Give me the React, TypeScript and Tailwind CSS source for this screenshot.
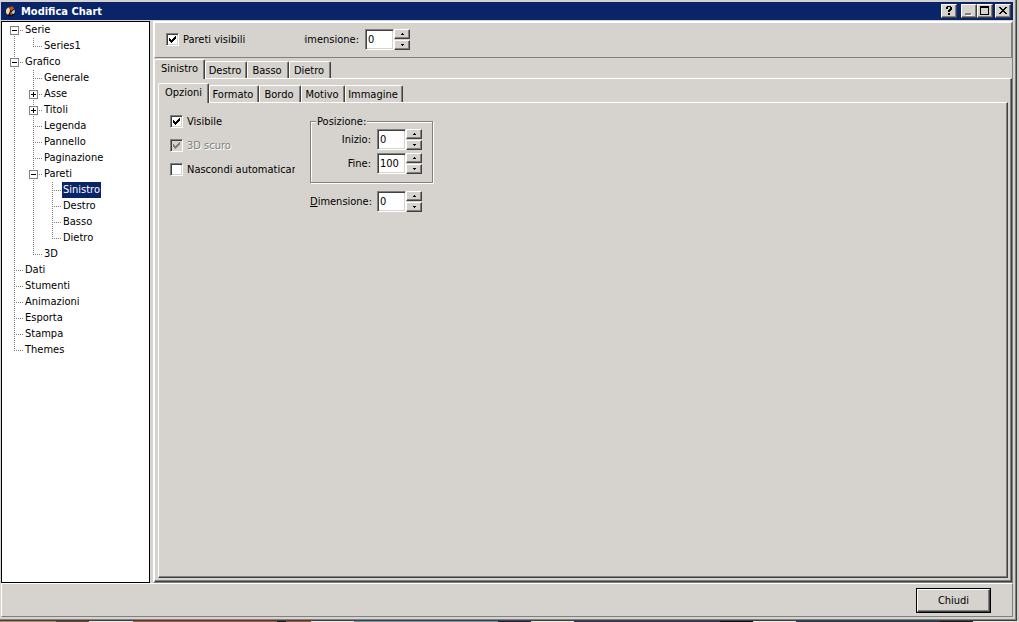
import { useState, type ReactNode } from "react";

const raised =
  "border border-t-white border-l-white border-r-[#404040] border-b-[#404040] shadow-[inset_-1px_-1px_0_#808080]";

type NodeRow = {
  label: string;
  cells: string[];
};

// v: line through, t: branch, e: last branch, f: first branch, plus/minus: expander
const rows: NodeRow[] = [
  { label: "Serie", cells: ["minus-f"] },
  { label: "Series1", cells: ["v", "e"] },
  { label: "Grafico", cells: ["minus-t"] },
  { label: "Generale", cells: ["v", "t"] },
  { label: "Asse", cells: ["v", "plus-t"] },
  { label: "Titoli", cells: ["v", "plus-t"] },
  { label: "Legenda", cells: ["v", "t"] },
  { label: "Pannello", cells: ["v", "t"] },
  { label: "Paginazione", cells: ["v", "t"] },
  { label: "Pareti", cells: ["v", "minus-t"] },
  { label: "Sinistro", cells: ["v", "v", "t"] },
  { label: "Destro", cells: ["v", "v", "t"] },
  { label: "Basso", cells: ["v", "v", "t"] },
  { label: "Dietro", cells: ["v", "v", "e"] },
  { label: "3D", cells: ["v", "e"] },
  { label: "Dati", cells: ["t"] },
  { label: "Stumenti", cells: ["t"] },
  { label: "Animazioni", cells: ["t"] },
  { label: "Esporta", cells: ["t"] },
  { label: "Stampa", cells: ["t"] },
  { label: "Themes", cells: ["e"] },
];

function TreeCell({ kind }: { kind: string }) {
  const box = kind.startsWith("plus") || kind.startsWith("minus");
  const shape = kind.slice(-1);
  const y1 = shape === "f" ? 8 : 0;
  const y2 = shape === "e" ? 9 : 16;
  return (
    <svg width="19" height="16" className="shrink-0" shapeRendering="crispEdges" aria-hidden="true">
      <line x1="9.5" x2="9.5" y1={y1} y2={y2} stroke="#808080" strokeDasharray="1 1" />
      {shape !== "v" && <line x1="9" x2="19" y1="8.5" y2="8.5" stroke="#808080" strokeDasharray="1 1" />}
      {box && (
        <>
          <rect x="5.5" y="4.5" width="8" height="8" fill="#fff" stroke="#808080" />
          <path d="M7 8.5h5" stroke="#000" />
          {kind.startsWith("plus") && <path d="M9.5 6v5" stroke="#000" />}
        </>
      )}
    </svg>
  );
}

function Tree() {
  const [selected, setSelected] = useState("Sinistro");
  return (
    <nav aria-label="Sezioni" className="w-[149px] shrink-0 border border-black bg-white pl-[3px]">
      <ul>
        {rows.map((row) => (
          <li key={row.label} className="flex h-4">
            {row.cells.map((cell, i) => (
              <TreeCell key={i} kind={cell} />
            ))}
            <button
              type="button"
              onClick={() => setSelected(row.label)}
              className={
                row.label === selected
                  ? "bg-[#0a246a] px-px pb-px text-left text-white"
                  : "px-px pb-px text-left"
              }
            >
              {row.label}
            </button>
          </li>
        ))}
      </ul>
    </nav>
  );
}

function Check({
  id,
  label,
  checked = false,
  disabled = false,
}: {
  id: string;
  label: string;
  checked?: boolean;
  disabled?: boolean;
}) {
  return (
    <div className="flex h-6 items-center gap-1 overflow-hidden">
      <span className="relative flex shrink-0">
        <input
          id={id}
          type="checkbox"
          defaultChecked={checked}
          disabled={disabled}
          className="peer size-[13px] appearance-none border border-t-[#808080] border-l-[#808080] border-r-white border-b-white bg-white shadow-[inset_1px_1px_0_#404040,inset_-1px_-1px_0_#d6d3ce] disabled:bg-[#d6d3ce]"
        />
        <svg
          viewBox="0 0 13 13"
          shapeRendering="crispEdges"
          className="pointer-events-none absolute inset-0 hidden size-[13px] fill-black peer-checked:block peer-disabled:fill-[#808080]"
          aria-hidden="true"
        >
          <path d="M3 5h1v3h-1zM4 6h1v3h-1zM5 7h1v3h-1zM6 6h1v3h-1zM7 5h1v3h-1zM8 4h1v3h-1zM9 3h1v3h-1z" />
        </svg>
      </span>
      <label
        htmlFor={id}
        className={
          disabled
            ? "whitespace-nowrap text-[#808080] [text-shadow:1px_1px_0_#fff]"
            : "whitespace-nowrap"
        }
      >
        {label}
      </label>
    </div>
  );
}

function Spinner({ id, initial }: { id: string; initial: number }) {
  const [value, setValue] = useState(String(initial));
  const step = (n: number) => setValue(String((Number(value) || 0) + n));
  const button = `flex h-[10px] w-4 items-center justify-center ${raised}`;
  return (
    <span className="flex h-[21px] shrink-0">
      <input
        id={id}
        type="text"
        value={value}
        onChange={(e) => setValue(e.target.value)}
        className="w-[29px] border border-t-[#808080] border-l-[#808080] border-r-white border-b-white bg-white pl-[2px] shadow-[inset_1px_1px_0_#404040,inset_-1px_-1px_0_#d6d3ce] outline-none"
      />
      <span className="flex flex-col justify-between">
        <button type="button" aria-label="Aumenta" className={button} onClick={() => step(1)}>
          <svg width="3" height="2" shapeRendering="crispEdges">
            <path d="M1 0h1v1h1v1h-3v-1h1z" />
          </svg>
        </button>
        <button type="button" aria-label="Diminuisci" className={button} onClick={() => step(-1)}>
          <svg width="3" height="2" shapeRendering="crispEdges">
            <path d="M0 0h3v1h-1v1h-1v-1h-1z" />
          </svg>
        </button>
      </span>
    </span>
  );
}

function Tab({
  label,
  width,
  active,
  onClick,
}: {
  label: string;
  width: string;
  active: boolean;
  onClick: () => void;
}) {
  return (
    <button
      type="button"
      role="tab"
      aria-selected={active}
      onClick={onClick}
      className={`${width} ${
        active ? "relative -mb-px h-5 pb-[2px]" : "h-[17px] pt-px pr-[2px]"
      } flex items-center justify-center rounded-t-[2px] border border-b-0 border-t-white border-l-white border-r-[#404040] bg-[#d6d3ce] shadow-[inset_-1px_0_0_#808080]`}
    >
      {label}
    </button>
  );
}

function TabSet({
  tabs,
  strip,
  page,
  children,
}: {
  tabs: { label: string; width: string }[];
  strip: string;
  page: string;
  children: ReactNode;
}) {
  const [active, setActive] = useState(tabs[0].label);
  return (
    <div className="flex flex-1 flex-col">
      <div role="tablist" className={`flex items-end ${strip}`}>
        {tabs.map((t) => (
          <Tab key={t.label} {...t} active={t.label === active} onClick={() => setActive(t.label)} />
        ))}
      </div>
      <div role="tabpanel" className={`flex flex-1 ${raised} ${page}`}>
        {children}
      </div>
    </div>
  );
}

const wallTabs = [
  { label: "Sinistro", width: "w-[51px]" },
  { label: "Destro", width: "w-[42px]" },
  { label: "Basso", width: "w-[42px]" },
  { label: "Dietro", width: "w-[42px]" },
];

const optionTabs = [
  { label: "Opzioni", width: "w-[51px]" },
  { label: "Formato", width: "w-[50px]" },
  { label: "Bordo", width: "w-[42px]" },
  { label: "Motivo", width: "w-[44px]" },
  { label: "Immagine", width: "w-[58px]" },
];

function TitleButton({ label, children }: { label: string; children: ReactNode }) {
  return (
    <button type="button" aria-label={label} className={`h-[14px] w-4 bg-[#d6d3ce] ${raised}`}>
      <svg width="14" height="12" shapeRendering="crispEdges">
        {children}
      </svg>
    </button>
  );
}

function TitleBar() {
  return (
    <header className="flex h-[18px] shrink-0 items-center bg-[#0a246a] pr-[2px] pl-[4px] text-white">
      <svg width="11" height="11" viewBox="0 0 11 11" aria-hidden="true">
        <circle cx="5.5" cy="5.5" r="5" fill="#0c0c14" />
        <path d="M4.5 1.5 5 5 3.5 8.5H2L1 6.5V3.5L3 1.5z" fill="#f4d4a0" />
        <path d="M4.5 .5h3l2 2L6.5 5 5 3.5z" fill="#b8501c" />
        <path d="M7 5.5 9.5 3.5l.5 2-1 2.5-2-.5z" fill="#b4c8e4" />
        <path d="M5 6.5 7 6v2.5l-1 1z" fill="#c86020" />
      </svg>
      <h1 className="ml-[5px] flex-1 font-bold">Modifica Chart</h1>
      <div className="flex">
        <TitleButton label="Guida">
          <path d="M4 2h1v-1h4v1h1v3h-1v1h-1v1h-2v-2h1v-1h1v-2h-2v2h-2zM6 8h2v2h-2z" fill="#000" />
        </TitleButton>
        <div className="ml-1 flex">
          <TitleButton label="Riduci a icona">
            <path d="M4 10h6v1h-6zM9 9h1v1h-1z" fill="#fff" />
            <path d="M3 8h6v2h-6z" fill="#808080" />
          </TitleButton>
          <TitleButton label="Ingrandisci">
            <path d="M2 1h9v9h-9zM3 3v6h7v-6z" fill="#000" fillRule="evenodd" />
          </TitleButton>
        </div>
        <div className="ml-[2px] flex">
          <TitleButton label="Chiudi finestra">
            <path
              d="M3 2h2v1h1v1h2v-1h1v-1h2v1h-1v1h-1v1h-1v1h1v1h1v1h1v1h-2v-1h-1v-1h-2v1h-1v1h-2v-1h1v-1h1v-1h1v-1h-1v-1h-1v-1h-1z"
              fill="#000"
            />
          </TitleButton>
        </div>
      </div>
    </header>
  );
}

function Backdrop() {
  return (
    <div className="flex h-px shrink-0 bg-[#e8e6e2]" aria-hidden="true">
      <i className="w-[56px] bg-[#c48444]" />
      <i className="w-[33px] bg-[#70401f]" />
      <i className="mr-[44px]" />
      <i className="w-[144px] bg-[#c05028]" />
      <i className="w-[9px] bg-[#301018]" />
      <i className="w-[25px] bg-[#b05028]" />
      <i className="mr-[43px]" />
      <i className="w-[144px] bg-[#609cac]" />
      <i className="w-[33px] bg-[#202050]" />
      <i className="mr-[43px]" />
      <i className="w-[146px] bg-[#383070]" />
      <i className="w-[33px] bg-[#101018]" />
      <i className="mr-[43px]" />
      <i className="w-[144px] bg-[#203c68]" />
      <i className="w-[33px] bg-[#181820]" />
    </div>
  );
}

export default function App() {
  return (
    <div className="flex h-screen flex-col bg-[#d0cec9] font-['DejaVu_Sans_Condensed','DejaVu_Sans',sans-serif] text-[11px] leading-[13px] text-black">
      <div className="mr-[2px] flex min-h-0 flex-1 flex-col border-r border-b border-[#404040]">
        <div className="flex flex-1 flex-col border-r border-b border-[#808080] bg-[#d6d3ce] pt-[2px] pr-[2px] pb-[2px] pl-px">
          <TitleBar />
          <main className="mt-px flex flex-1 gap-[3px]">
            <Tree />
            <section className="flex flex-1 flex-col border border-t-white border-l-white border-r-[#808080] border-b-[#808080]">
              <div className="flex h-9 items-center border border-t-white border-l-white border-r-[#808080] border-b-[#808080] pb-[2px] pl-[11px]">
                <div className="w-[138px]">
                  <Check id="walls" label="Pareti visibili" checked />
                </div>
                <div className="flex items-center gap-[6px]">
                  <label htmlFor="size3d" className="flex w-[55px] justify-end overflow-hidden">
                    Dimensione:
                  </label>
                  <Spinner id="size3d" initial={0} />
                </div>
              </div>
              <TabSet tabs={wallTabs} strip="h-5" page="pl-[3px] pr-[3px] pb-[3px]">
                <TabSet tabs={optionTabs} strip="h-[23px]" page="items-start gap-[15px] pt-[6px] pl-[11px]">
                  <div className="w-[125px]">
                    <Check id="visible" label="Visibile" checked />
                    <Check id="dark" label="3D scuro" checked disabled />
                    <Check id="autohide" label="Nascondi automaticamente" />
                  </div>
                  <div className="flex flex-col gap-2 pt-[6px]">
                    <fieldset className="w-[123px] border border-[#808080] pt-px pr-[10px] pb-2 pl-[5px] shadow-[1px_1px_0_#fff,inset_1px_1px_0_#fff]">
                      <legend className="bg-[#d6d3ce] px-px">Posizione:</legend>
                      <div className="flex flex-col items-end gap-[3px]">
                        <div className="flex items-center gap-[6px]">
                          <label htmlFor="start">Inizio:</label>
                          <Spinner id="start" initial={0} />
                        </div>
                        <div className="flex items-center gap-[6px]">
                          <label htmlFor="end">Fine:</label>
                          <Spinner id="end" initial={100} />
                        </div>
                      </div>
                    </fieldset>
                    <div className="flex items-center justify-end gap-[5px] pr-[11px]">
                      <label htmlFor="size">
                        <u>D</u>imensione:
                      </label>
                      <Spinner id="size" initial={0} />
                    </div>
                  </div>
                </TabSet>
              </TabSet>
            </section>
          </main>
          <footer className="flex h-[34px] justify-end border border-t-white border-l-white border-r-[#808080] border-b-[#808080] pt-1 pr-[21px]">
            <div className="h-[25px] border border-black">
              <button type="button" className={`h-full w-[73px] ${raised}`}>
                Chiudi
              </button>
            </div>
          </footer>
        </div>
      </div>
      <Backdrop />
    </div>
  );
}
